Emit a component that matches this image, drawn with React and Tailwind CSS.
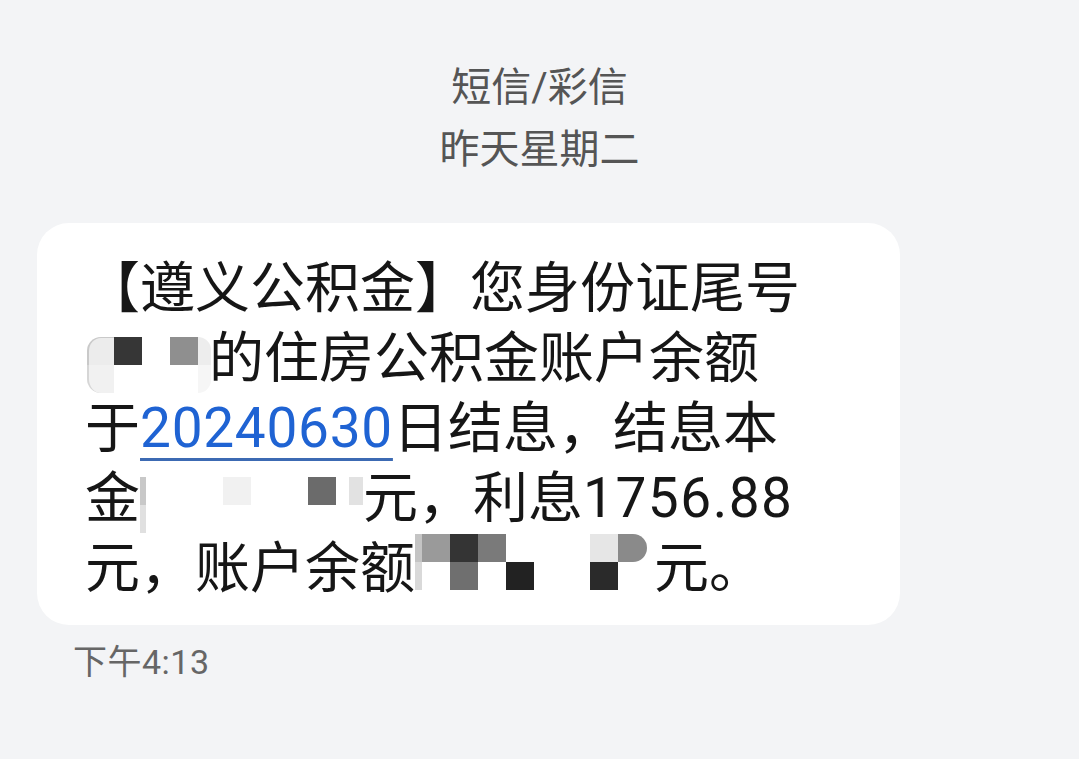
const LINE2 = [
  ['w-[27px] bg-[#ececec] rounded-tl-[14px] border-l-2 border-t border-[#c9c9c9]', 'w-[27px] bg-[#f1f1f1] rounded-bl-[14px] border-l-2 border-[#d6d6d6]'],
  ['w-[28px] bg-[#363636]', 'w-[28px] bg-white'],
  ['w-[28px] bg-white', 'w-[28px] bg-white'],
  ['w-[28px] bg-[#8f8f8f]', 'w-[28px] bg-white'],
  ['w-[13px] bg-[#ededed] rounded-tr-[14px]', 'w-[13px] bg-[#f6f6f6] rounded-br-[14px]'],
];

const LINE4 = [
  ['w-[6px] bg-[#c8c8c8]', 'w-[6px] bg-[#e0e0e0]'],
  ['w-[77px] bg-white', 'w-[77px] bg-white'],
  ['w-[28px] bg-[#f1f1f1]', 'w-[28px] bg-white'],
  ['w-[57px] bg-white', 'w-[57px] bg-white'],
  ['w-[28px] bg-[#6b6b6b]', 'w-[28px] bg-white'],
  ['w-[13px] bg-white', 'w-[13px] bg-white'],
  ['w-[14px] bg-[#e2e2e2]', 'w-[14px] bg-white'],
];

const LINE5 = [
  ['w-[7px] bg-[#c4c4c4]', 'w-[7px] bg-[#d9d9d9]'],
  ['w-[28px] bg-[#9a9a9a]', 'w-[28px] bg-white'],
  ['w-[28px] bg-[#343434]', 'w-[28px] bg-[#6f6f6f]'],
  ['w-[28px] bg-[#7a7a7a]', 'w-[28px] bg-white'],
  ['w-[28px] bg-white', 'w-[28px] bg-[#222222]'],
  ['w-[56px] bg-white', 'w-[56px] bg-white'],
  ['w-[28px] bg-[#e6e6e6]', 'w-[28px] bg-[#2a2a2a]'],
  ['w-[29px] bg-[#8a8a8a] rounded-r-[14px]', 'w-[29px] bg-white rounded-r-[14px]'],
  ['w-[7px] bg-white', 'w-[7px] bg-white'],
];

function Redact({ cells, className }) {
  return (
    <span className={`inline-flex flex-col align-top ${className}`}>
      <span className="flex h-[28px]">
        {cells.map((c, i) => <span key={i} className={`h-full ${c[0]}`} />)}
      </span>
      <span className="flex h-[28px]">
        {cells.map((c, i) => <span key={i} className={`h-full ${c[1]}`} />)}
      </span>
    </span>
  );
}

export default function App() {
  return (
    <div className="w-[1079px] h-[759px] bg-[#f3f4f6] overflow-hidden font-[Roboto,'Noto_Sans_CJK_SC',sans-serif]">
      <div className="pt-[57px] text-center text-[40px] leading-[62px] text-[#555555]">
        <div>短信/彩信</div>
        <div>昨天星期二</div>
      </div>

      <div className="mt-[42px] ml-[37px] w-[863px] h-[402px] bg-white rounded-[32px] pl-[48px] pt-[30px] text-[55px] leading-[70px] text-[#161616]">
        <div className="h-[70px] whitespace-nowrap">【遵义公积金】您身份证尾号</div>
        <div className="h-[70px] whitespace-nowrap">
          <Redact cells={LINE2} className="mt-[14px] ml-[2px] mr-[-2px]" />
          的住房公积金账户余额
        </div>
        <div className="h-[70px] whitespace-nowrap">
          于<span className="tracking-[0.7px] text-[#1f63d3] underline decoration-[#3c6ab3] decoration-[3px] underline-offset-[11px]">20240630</span>日结息，结息本
        </div>
        <div className="h-[70px] whitespace-nowrap">
          金<Redact cells={LINE4} className="mt-[14px]" />元，利息<span className="tracking-[1.5px]">1756.88</span>
        </div>
        <div className="h-[70px] whitespace-nowrap">
          元，账户余额<Redact cells={LINE5} className="mt-[1px]" />元。
        </div>
      </div>

      <div className="mt-[17px] pl-[73px] text-[34px] leading-[40px] tracking-[0.5px] text-[#666666]">下午4:13</div>
    </div>
  );
}
